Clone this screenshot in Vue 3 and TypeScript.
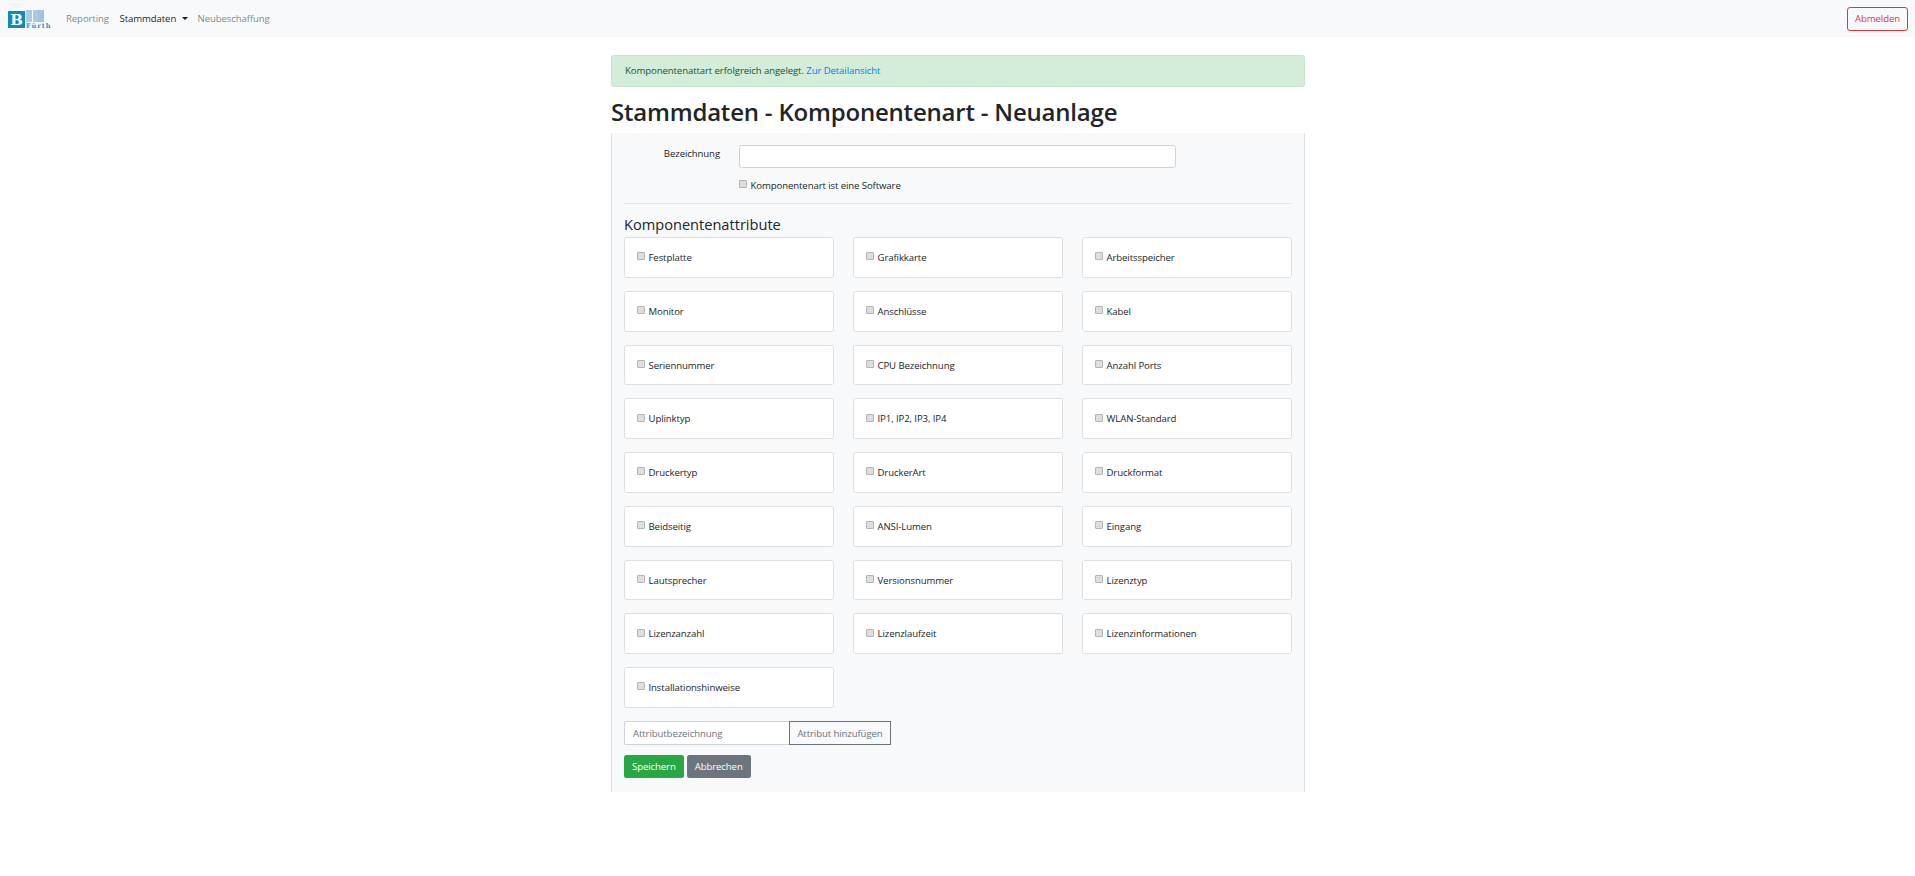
<template>
  <div class="page">
    <nav class="navbar">
      <svg class="logo" width="44" height="20" viewBox="0 0 44 20">
        <rect x="0" y="1" width="17" height="17" fill="#1089c0" />
        <text x="8.5" y="15" text-anchor="middle" class="logo-b">B</text>
        <rect x="18" y="0" width="6" height="12" fill="#a9cbe8" />
        <rect x="25" y="0" width="5" height="12" fill="#a9cbe8" />
        <rect x="30" y="0" width="6" height="12" fill="#9dc3e6" />
        <text x="18" y="18" class="logo-text">Fürth</text>
      </svg>
      <a class="nav-link">Reporting</a>
      <a class="nav-link active">Stammdaten <span class="caret"></span></a>
      <a class="nav-link">Neubeschaffung</a>
      <button class="btn-logout">Abmelden</button>
    </nav>

    <main class="content">
      <div class="alert">Komponentenattart erfolgreich angelegt. <a class="alert-link">Zur Detailansicht</a></div>
      <h1>Stammdaten - Komponentenart - Neuanlage</h1>

      <form class="panel">
        <div class="name-row">
          <label class="name-label">Bezeichnung</label>
          <input class="name-input" type="text" />
        </div>
        <label class="check software">
          <span class="box"></span>
          Komponentenart ist eine Software
        </label>
        <hr />
        <h4>Komponentenattribute</h4>
        <div class="attr-grid">
          <label class="attr-card" v-for="attr in attributes" :key="attr">
            <span class="check">
              <span class="box"></span>
              {{ attr }}
            </span>
          </label>
        </div>
        <div class="add-row">
          <input class="add-input" type="text" placeholder="Attributbezeichnung" />
          <button type="button" class="add-btn">Attribut hinzufügen</button>
        </div>
        <div class="actions">
          <button type="button" class="btn save">Speichern</button>
          <button type="button" class="btn cancel">Abbrechen</button>
        </div>
      </form>
    </main>
  </div>
</template>

<script setup lang="ts">
const attributes: string[] = [
  'Festplatte', 'Grafikkarte', 'Arbeitsspeicher',
  'Monitor', 'Anschlüsse', 'Kabel',
  'Seriennummer', 'CPU Bezeichnung', 'Anzahl Ports',
  'Uplinktyp', 'IP1, IP2, IP3, IP4', 'WLAN-Standard',
  'Druckertyp', 'DruckerArt', 'Druckformat',
  'Beidseitig', 'ANSI-Lumen', 'Eingang',
  'Lautsprecher', 'Versionsnummer', 'Lizenztyp',
  'Lizenzanzahl', 'Lizenzlaufzeit', 'Lizenzinformationen',
  'Installationshinweise',
]
</script>

<style>
html, body {
  margin: 0;
  background: #fff;
}
</style>

<style scoped>
.page {
  font-family: "Open Sans", "Noto Sans", sans-serif;
  font-size: 9.6px;
  letter-spacing: -0.1px;
  line-height: 15.4px;
  color: #212529;
  min-height: 876px;
}

.navbar {
  height: 37px;
  box-sizing: border-box;
  background: #f8f9fa;
  display: flex;
  align-items: center;
  padding: 0 7px 0 8px;
}

.logo {
  margin-right: 14px;
  margin-top: 3px;
}

.logo-b {
  font-family: "DejaVu Serif", serif;
  font-weight: 700;
  font-size: 15px;
  fill: #fff;
}

.logo-text {
  font-family: "DejaVu Serif", serif;
  font-weight: 700;
  font-size: 6.5px;
  letter-spacing: 1px;
  fill: #2f8fbf;
}

.nav-link {
  color: rgba(0, 0, 0, 0.5);
  margin-right: 10.6px;
}

.nav-link.active {
  color: rgba(0, 0, 0, 0.9);
  margin-right: 10px;
}

.caret {
  display: inline-block;
  margin-left: 3px;
  vertical-align: 2px;
  border-top: 3.5px solid;
  border-left: 3.5px solid transparent;
  border-right: 3.5px solid transparent;
}

.btn-logout {
  margin-left: auto;
  height: 24px;
  width: 61px;
  padding: 0;
  background: transparent;
  border: 1px solid #dc3545;
  border-radius: 3px;
  color: #dc3545;
  font: inherit;
  letter-spacing: inherit;
}

.content {
  width: 694px;
  margin: 18px auto 0 611px;
}

.alert {
  height: 32px;
  box-sizing: border-box;
  padding: 7px 13px;
  background: #d4edda;
  border: 1px solid #c3e6cb;
  border-radius: 2.5px;
  color: #155724;
}

.alert-link {
  color: #007bff;
}

h1 {
  margin: 10px 0 5px;
  font-size: 24px;
  line-height: 30.7px;
  font-weight: 600;
  letter-spacing: -0.2px;
}

.panel {
  box-sizing: border-box;
  height: 659px;
  padding: 12px 12px 0;
  background: #f8f9fa;
  border-left: 1px solid #dee2e6;
  border-right: 1px solid #dee2e6;
}

.name-row {
  display: flex;
  align-items: flex-start;
}

.name-label {
  width: 115px;
  padding: 1px 19px 0 0;
  box-sizing: border-box;
  text-align: right;
  line-height: 15px;
}

.name-input {
  width: 437px;
  height: 23px;
  box-sizing: border-box;
  background: #fff;
  border: 1px solid #ced4da;
  border-radius: 2.5px;
}

.check {
  display: flex;
  align-items: center;
  gap: 3.5px;
}

.software {
  margin: 10px 0 0 115px;
}

.box {
  width: 8px;
  height: 8px;
  margin-top: -3px;
  box-sizing: border-box;
  background: #dedede;
  border: 1px solid #b4b4b4;
  border-radius: 1px;
}

hr {
  margin: 10px 0 0;
  border: 0;
  border-top: 1px solid #e4e6e8;
}

h4 {
  margin: 11px 0 3.5px;
  font-size: 14.6px;
  line-height: 18.4px;
  font-weight: 500;
  letter-spacing: 0;
}

.attr-grid {
  display: grid;
  grid-template-columns: repeat(3, 209.75px);
  column-gap: 19.25px;
  row-gap: 13px;
}

.attr-card {
  display: flex;
  align-items: center;
  height: 40.75px;
  box-sizing: border-box;
  padding: 1px 12px 0;
  background: #fff;
  border: 1px solid #dfdfdf;
  border-radius: 2.5px;
}

.add-row {
  display: flex;
  margin-top: 13.5px;
}

.add-input {
  width: 165px;
  height: 24px;
  box-sizing: border-box;
  padding: 0 8px;
  background: #fff;
  border: 1px solid #ced4da;
  border-right: 0;
  border-radius: 2.5px 0 0 2.5px;
  font: inherit;
  letter-spacing: inherit;
}

.add-input::placeholder {
  color: #6c757d;
}

.add-btn {
  width: 102px;
  height: 24px;
  padding: 0;
  background: transparent;
  border: 1px solid #6c757d;
  color: #6c757d;
  font: inherit;
  letter-spacing: inherit;
}

.actions {
  display: flex;
  gap: 3px;
  margin-top: 10px;
}

.btn {
  height: 23px;
  padding: 0 8px;
  border: 0;
  border-radius: 2.5px;
  color: #fff;
  font: inherit;
  letter-spacing: inherit;
}

.save {
  background: #28a745;
}

.cancel {
  background: #6c757d;
}
</style>
